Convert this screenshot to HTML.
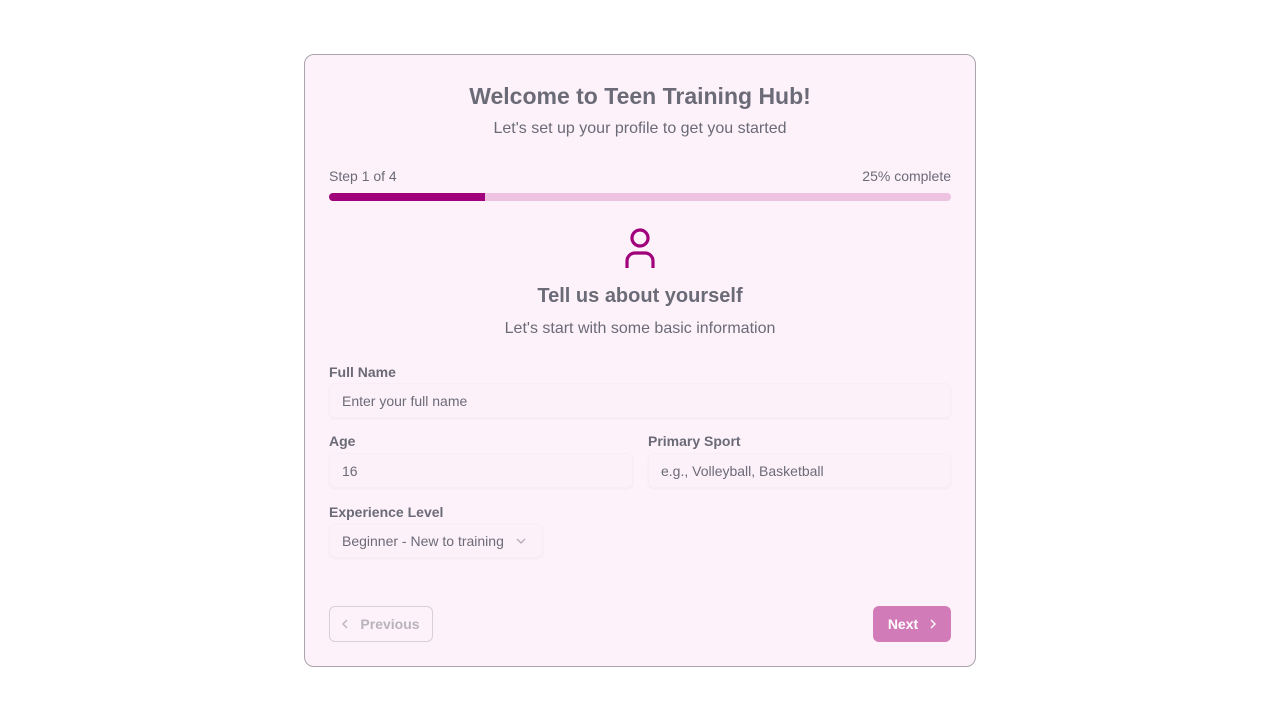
<!DOCTYPE html>
<html><head><style>
*{box-sizing:border-box;margin:0;padding:0}
body{width:1280px;height:720px;background:#fff;font-family:"Liberation Sans",sans-serif;position:relative;color:#6b6b78}
.card{position:absolute;left:304px;top:54px;width:672px;height:613px;background:#fdf2fa;border:1px solid #a9a4ad;border-radius:10px}
.abs{position:absolute}
h1{position:absolute;left:0;width:100%;top:28px;text-align:center;font-size:23px;font-weight:bold;color:#6b6b78}
.c{text-align:center;width:100%;left:0}
.lbl{font-size:14px;font-weight:bold;color:#6b6b78}
.in{position:absolute;background:#fdf1f9;border-radius:6px;box-shadow:0 1px 2px rgba(0,0,0,0.04);border:1px solid #f9ecf5;font-size:14px;color:#6b6b78;padding-left:12px;display:flex;align-items:center}
</style></head><body>
<div class="card">
<h1>Welcome to Teen Training Hub!</h1>
<div class="abs c" style="top:65px;font-size:16px">Let's set up your profile to get you started</div>
<div class="abs" style="left:24px;top:113px;font-size:14px">Step 1 of 4</div>
<div class="abs" style="right:24px;top:113px;font-size:14px">25% complete</div>
<div class="abs" style="left:24px;top:138px;width:622px;height:8px;border-radius:4px;background:#edc3e1;overflow:hidden"><div style="width:156px;height:8px;background:#a0007a"></div></div>
<svg class="abs" style="left:318px;top:172px" width="34" height="44" viewBox="0 0 34 44"><circle cx="17" cy="11" r="8" fill="none" stroke="#a0007a" stroke-width="3.2"/><path d="M4 41V34a8 8 0 0 1 8-8h10a8 8 0 0 1 8 8v7" fill="none" stroke="#a0007a" stroke-width="3.2"/></svg>
<div class="abs c" style="top:230px;font-size:20px;font-weight:bold">Tell us about yourself</div>
<div class="abs c" style="top:265px;font-size:16px">Let's start with some basic information</div>
<div class="abs lbl" style="left:24px;top:309px">Full Name</div>
<div class="in" style="left:24px;top:328px;width:622px;height:35px">Enter your full name</div>
<div class="abs lbl" style="left:24px;top:378px">Age</div>
<div class="in" style="left:24px;top:398px;width:304px;height:35px">16</div>
<div class="abs lbl" style="left:343px;top:378px">Primary Sport</div>
<div class="in" style="left:343px;top:398px;width:303px;height:35px">e.g., Volleyball, Basketball</div>
<div class="abs lbl" style="left:24px;top:449px">Experience Level</div>
<div class="in" style="left:24px;top:468px;width:214px;height:35px">Beginner - New to training<svg style="margin-left:12px" width="10" height="6" viewBox="0 0 10 6"><path d="M1 1l4 4 4-4" fill="none" stroke="#b5aab5" stroke-width="1.3"/></svg></div>
<div class="abs" style="left:24px;top:551px;width:104px;height:36px;border:1px solid #d8d0d8;border-radius:6px;display:flex;align-items:center;justify-content:center;font-size:14px;font-weight:bold;color:#b9b3bb"><svg style="margin-right:12px" width="6" height="10" viewBox="0 0 6 10"><path d="M5 1L1 5l4 4" fill="none" stroke="#b9b3bb" stroke-width="1.4"/></svg>Previous</div>
<div class="abs" style="left:568px;top:551px;width:78px;height:36px;background:#d27bb9;border-radius:6px;display:flex;align-items:center;justify-content:center;font-size:14px;font-weight:bold;color:#fff">Next<svg style="margin-left:12px" width="6" height="10" viewBox="0 0 6 10"><path d="M1 1l4 4-4 4" fill="none" stroke="#fff" stroke-width="1.4"/></svg></div>
</div>
</body></html>
